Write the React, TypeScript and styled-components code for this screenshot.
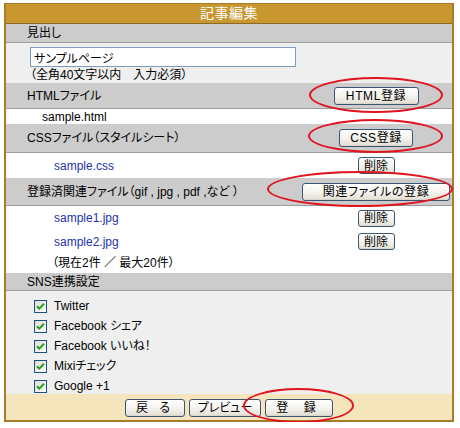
import styled, { createGlobalStyle } from "styled-components"

const GlobalStyle = createGlobalStyle`
  body {
    margin: 0;
    background: #fff;
    color: #000;
    font-family: "Liberation Sans", "Noto Sans CJK JP", sans-serif;
    font-size: 12px;
    font-feature-settings: "palt";
  }
`

const Page = styled.div`
  padding: 3px 0 0 4px;
`

const Panel = styled.div`
  width: 450px;
  box-sizing: border-box;
  border: 2px solid #a67d2b;
  border-top-width: 1px;
`

const Header = styled.div`
  height: 19px;
  line-height: 19px;
  background: #c9972f;
  border-bottom: 1px solid #8c6a24;
  color: #fff;
  text-align: center;
  font-size: 14px;
  letter-spacing: 0.5px;
`

const Bar = styled.div<{ $h: number }>`
  height: ${(p) => p.$h}px;
  background: #cccccc;
  border-bottom: 1px solid #9c9c9c;
  display: grid;
  grid-template-columns: 1fr 152px;
  align-items: center;
  justify-items: start;
  padding-left: 21px;
  line-height: 14px;
`

const Cell = styled.div`
  justify-self: center;
  display: flex;
`

const InputArea = styled.div`
  height: 40px;
  background: #efefef;
  padding: 4px 0 0 24px;
  box-sizing: border-box;
  line-height: 14px;
`

const TextBox = styled.input`
  display: block;
  width: 266px;
  height: 20px;
  box-sizing: border-box;
  margin: 0;
  border: 1px solid #7f9db9;
  padding: 0 3px;
  font: inherit;
  font-size: 12px;
  color: #000;
  background: #fff;
`

const Hint = styled.div`
  margin-top: 1px;
`

const FileRow = styled.div<{ $h: number; $indent: number }>`
  height: ${(p) => p.$h}px;
  background: #fff;
  display: grid;
  grid-template-columns: 1fr 152px;
  align-items: center;
  padding-left: ${(p) => p.$indent}px;
  line-height: 14px;
`

const FileName = styled.span<{ $link?: boolean }>`
  color: ${(p) => (p.$link ? "#2233aa" : "#000")};
`

const Checks = styled.div`
  height: 103px;
  box-sizing: border-box;
  background: #efefef;
  padding: 5px 0 0 28px;
`

const CheckRow = styled.div`
  height: 20px;
  display: flex;
  align-items: center;
  gap: 7px;
  line-height: 14px;
`

const Footer = styled.div`
  height: 26px;
  background: #f4e5bd;
  display: flex;
  justify-content: center;
  align-items: center;
  gap: 4px;
  padding-top: 2px;
  box-sizing: border-box;
`

const Button = styled.button<{ $w: number; $h?: number; $ls?: number }>`
  width: ${(p) => p.$w}px;
  height: ${(p) => p.$h ?? 18}px;
  margin: 0;
  padding: 0;
  border: 1px solid #3b5573;
  border-radius: 3px;
  background: linear-gradient(#ffffff 0%, #f4f3ee 50%, #e6e3da 90%, #d6d0c5 100%);
  font-family: inherit;
  font-feature-settings: "palt";
  font-size: 12px;
  line-height: 14px;
  color: #000;
  letter-spacing: ${(p) => p.$ls ?? 0}px;
`

const Marked = styled.div`
  position: relative;
  display: flex;
`

const Ring = styled.span<{ $l: number; $r: number; $t: number; $b: number }>`
  position: absolute;
  left: ${(p) => p.$l}px;
  right: ${(p) => p.$r}px;
  top: ${(p) => p.$t}px;
  bottom: ${(p) => p.$b}px;
  border: 2px solid #e0141e;
  border-radius: 50%;
  pointer-events: none;
`

const CheckBox = () => (
  <svg width="13" height="13" viewBox="0 0 13 13">
    <defs>
      <linearGradient id="cbg" x1="0" y1="0" x2="1" y2="1">
        <stop offset="0" stopColor="#dcdcd4" />
        <stop offset="1" stopColor="#ffffff" />
      </linearGradient>
    </defs>
    <rect x="0.5" y="0.5" width="12" height="12" fill="url(#cbg)" stroke="#1c5180" />
    <path d="M3 6.2 L5.3 8.6 L10 3.8" fill="none" stroke="#21a121" strokeWidth="2" />
  </svg>
)

const sns = ["Twitter", "Facebook シェア", "Facebook いいね！", "Mixiチェック", "Google +1"]

const App = () => {
  return (
    <Page>
      <GlobalStyle />
      <Panel>
        <Header>記事編集</Header>

        <Bar $h={18}>見出し</Bar>
        <InputArea>
          <TextBox defaultValue="サンプルページ" />
          <Hint>（全角40文字以内　入力必須）</Hint>
        </InputArea>

        <Bar $h={25}>
          <span>HTMLファイル</span>
          <Cell>
            <Marked>
              <Button $w={85} $ls={0.6}>HTML登録</Button>
              <Ring $l={-25} $r={-24} $t={-10} $b={-8} />
            </Marked>
          </Cell>
        </Bar>
        <FileRow $h={15} $indent={36}>
          <FileName>sample.html</FileName>
        </FileRow>

        <Bar $h={28}>
          <span>CSSファイル（スタイルシート）</span>
          <Cell>
            <Marked>
              <Button $w={74} $ls={0.6}>CSS登録</Button>
              <Ring $l={-31} $r={-30} $t={-10} $b={-6} />
            </Marked>
          </Cell>
        </Bar>
        <FileRow $h={25} $indent={48}>
          <FileName $link>sample.css</FileName>
          <Cell>
            <Button $w={37} $h={17}>削除</Button>
          </Cell>
        </FileRow>

        <Bar $h={27}>
          <span>登録済関連ファイル（gif , jpg , pdf ,など ）</span>
          <Cell>
            <Marked>
              <Button $w={148} $ls={0.6}>関連ファイルの登録</Button>
              <Ring $l={-35} $r={-3} $t={-12} $b={-6} />
            </Marked>
          </Cell>
        </Bar>
        <FileRow $h={24} $indent={48}>
          <FileName $link>sample1.jpg</FileName>
          <Cell>
            <Button $w={37} $h={17}>削除</Button>
          </Cell>
        </FileRow>
        <FileRow $h={23} $indent={48}>
          <FileName $link>sample2.jpg</FileName>
          <Cell>
            <Button $w={37} $h={17}>削除</Button>
          </Cell>
        </FileRow>
        <FileRow $h={20} $indent={46}>
          <FileName>（現在2件 ／ 最大20件）</FileName>
        </FileRow>

        <Bar $h={17}>SNS連携設定</Bar>
        <Checks>
          {sns.map((s) => (
            <CheckRow key={s}>
              <CheckBox />
              <span>{s}</span>
            </CheckRow>
          ))}
        </Checks>

        <Footer>
          <Button $w={60} $ls={4}>戻 る</Button>
          <Button $w={72}>プレビュー</Button>
          <Marked>
            <Button $w={68} $ls={6}>登 録</Button>
            <Ring $l={-22} $r={-21} $t={-11} $b={-6} />
          </Marked>
        </Footer>
      </Panel>
    </Page>
  )
}

export default App
